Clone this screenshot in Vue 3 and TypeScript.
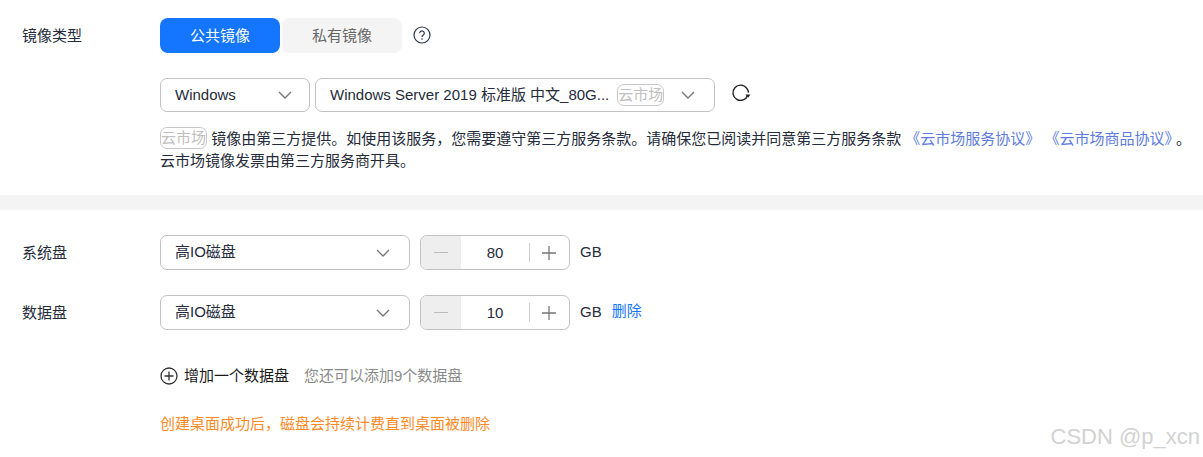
<script setup lang="ts">
interface Disk { label: string; value: number; removable: boolean }
const disks: Disk[] = [
  { label: '系统盘', value: 80, removable: false },
  { label: '数据盘', value: 10, removable: true },
]
</script>

<template>
  <div class="page">
    <section class="image-section">
      <div class="row type-row">
        <div class="label">镜像类型</div>
        <div class="tabs">
          <button class="tab active">公共镜像</button>
          <button class="tab">私有镜像</button>
        </div>
        <svg class="help" width="18" height="18" viewBox="0 0 18 18">
          <circle cx="9" cy="9" r="8" fill="none" stroke="#2b3550" stroke-width="1.2" />
          <path d="M6.7 7.2a2.3 2.3 0 1 1 3.6 1.9c-.8.5-1.3.9-1.3 1.9" fill="none" stroke="#2b3550" stroke-width="1.2" />
          <circle cx="9" cy="13" r=".8" fill="#2b3550" />
        </svg>
      </div>
      <div class="select-row">
        <div class="select os">
          <span class="value">Windows</span>
          <svg class="chev" width="14" height="8" viewBox="0 0 14 8"><path d="M1 1l6 6 6-6" fill="none" stroke="#777" stroke-width="1.4" /></svg>
        </div>
        <div class="select image">
          <span class="value">Windows Server 2019 标准版 中文_80G...</span>
          <span class="tag">云市场</span>
          <svg class="chev" width="14" height="8" viewBox="0 0 14 8"><path d="M1 1l6 6 6-6" fill="none" stroke="#777" stroke-width="1.4" /></svg>
        </div>
        <svg class="refresh" width="20" height="20" viewBox="0 0 20 20">
          <path d="M16.7 11.2A7.6 7.6 0 1 1 15.6 4.2c1.2 1.2 1.8 2.8 1.9 4.4" fill="none" stroke="#222" stroke-width="1.4" />
          <path d="M14.4 10.4h5l-2.2 3.4z" fill="#222" />
        </svg>
      </div>
      <div class="notice">
        <p class="line"><span class="tag inline">云市场</span> 镜像由第三方提供。如使用该服务，您需要遵守第三方服务条款。请确保您已阅读并同意第三方服务条款 <a class="link">《云市场服务协议》</a> <a class="link">《云市场商品协议》</a>。</p>
        <p class="line">云市场镜像发票由第三方服务商开具。</p>
      </div>
    </section>

    <div class="band"></div>

    <section class="disk-section">
      <div v-for="d in disks" :key="d.label" class="row disk-row">
        <div class="label">{{ d.label }}</div>
        <div class="select disk">
          <span class="value">高IO磁盘</span>
          <svg class="chev" width="14" height="8" viewBox="0 0 14 8"><path d="M1 1l6 6 6-6" fill="none" stroke="#777" stroke-width="1.4" /></svg>
        </div>
        <div class="stepper">
          <div class="step minus"><span class="bar"></span></div>
          <div class="num">{{ d.value }}</div>
          <div class="step plus">
            <svg width="16" height="16" viewBox="0 0 16 16"><path d="M8 1v14M1 8h14" fill="none" stroke="#777" stroke-width="1.3" /></svg>
          </div>
        </div>
        <span class="unit">GB</span>
        <a v-if="d.removable" class="remove">删除</a>
      </div>
      <div class="add-row">
        <svg width="18" height="18" viewBox="0 0 18 18">
          <circle cx="9" cy="9" r="8" fill="none" stroke="#333" stroke-width="1.3" />
          <path d="M9 4.5v9M4.5 9h9" fill="none" stroke="#333" stroke-width="1.3" />
        </svg>
        <span class="add-text">增加一个数据盘</span>
        <span class="add-hint">您还可以添加9个数据盘</span>
      </div>
      <p class="warn">创建桌面成功后，磁盘会持续计费直到桌面被删除</p>
    </section>

    <div class="mark">CSDN @p_xcn</div>
  </div>
</template>

<style>
html, body { margin: 0; background: #fff; }
</style>

<style scoped>
.page {
  position: relative;
  width: 1203px;
  height: 457px;
  overflow: hidden;
  background: #fff;
  color: #252b3a;
  font: 15px/20px Arial, "Liberation Sans", "Noto Sans CJK SC", sans-serif;
}
.image-section { height: 195px; padding: 18px 0 0 22px; box-sizing: border-box; }
.row { display: flex; align-items: center; }
.label { width: 138px; flex: none; color: #252b3a; }
.tabs { display: flex; gap: 2px; }
.tab {
  width: 120px;
  height: 35px;
  border: 0;
  padding: 0;
  border-radius: 8px;
  background: #f4f4f4;
  color: #666;
  font: inherit;
}
.tab.active { background: #1476ff; color: #fff; }
.help { margin: -1px 0 0 11px; }
.select-row { display: flex; align-items: center; gap: 5px; margin: 25px 0 0 138px; }
.select {
  display: flex;
  align-items: center;
  box-sizing: border-box;
  height: 34px;
  padding: 0 14px;
  background: #fff;
  border: 1px solid #c2c2c2;
  border-radius: 7px;
}
.value { flex: 1; white-space: nowrap; color: #252b3a; margin-top: -1px; }
.os { width: 150px; }
.image { width: 400px; }
.image .value { flex: none; }
.image .tag { margin-left: 8px; }
.image .chev { margin-left: auto; margin-right: 5px; }
.os .chev { margin-right: 3px; }
.disk .chev { margin-right: 5px; }
.refresh { margin: -3px 0 0 11px; }
.tag {
  display: inline-block;
  box-sizing: border-box;
  width: 47px;
  height: 22px;
  line-height: 20px;
  border: 1px solid #c8c8c8;
  border-radius: 7px;
  color: #c0c0c0;
  text-align: center;
  white-space: nowrap;
  overflow: hidden;
  font-size: 15px;
}
.tag.inline { vertical-align: -5px; }
.notice { margin: 15px 0 0 138px; }
.line { margin: 0; height: 23px; line-height: 22px; white-space: nowrap; color: #252b3a; }
.link { color: #5e7ce0; }
.link + .link { margin-right: 4px; }
.band { height: 15px; background: #f4f4f4; }
.disk-section { padding: 25px 0 0 22px; }
.disk-row { height: 35px; margin-bottom: 25px; }
.disk { width: 250px; height: 35px; }
.stepper {
  display: flex;
  box-sizing: border-box;
  width: 150px;
  height: 35px;
  margin-left: 10px;
  border: 1px solid #c2c2c2;
  border-radius: 7px;
  overflow: hidden;
}
.step { display: flex; align-items: center; justify-content: center; width: 40px; flex: none; position: relative; }
.minus { background: #eee; }
.bar { width: 14px; height: 1.5px; background: #bbb; }
.plus::before {
  content: "";
  position: absolute;
  left: 0;
  top: 7px;
  bottom: 7px;
  width: 1px;
  background: #ccc;
}
.num { flex: 1; text-align: center; line-height: 33px; color: #252b3a; }
.unit { margin: -1px 0 0 10px; }
.remove { margin: -3px 0 0 10px; color: #1476ff; }
.add-row { display: flex; align-items: center; margin: 36px 0 0 138px; height: 20px; }
.add-text { margin-left: 6px; color: #191919; margin-top: -1px; }
.add-hint { margin-left: 15px; color: #8a8a8a; }
.warn { margin: 28px 0 0 138px; color: #ff8a1f; line-height: 20px; }
.mark {
  position: absolute;
  right: 3px;
  bottom: 8px;
  color: #d2d2d2;
  font-size: 22px;
  line-height: 24px;
}
</style>
